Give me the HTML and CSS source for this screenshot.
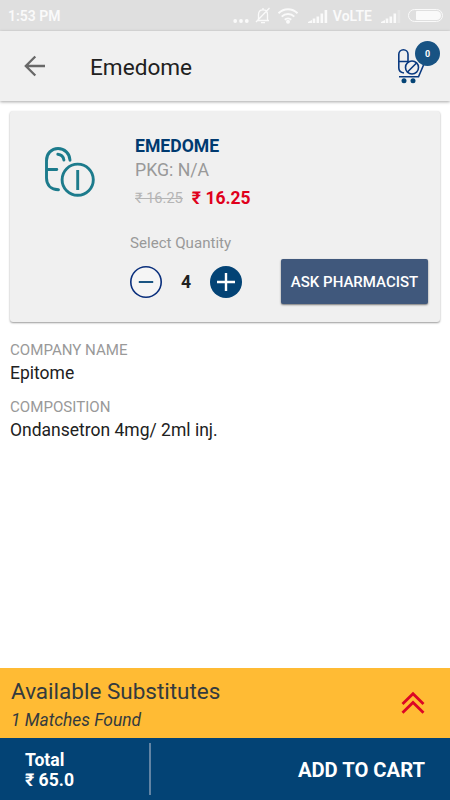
FILE: index.html
```html
<!DOCTYPE html>
<html lang="en">
<head>
  <meta charset="UTF-8">
  <meta name="viewport" content="width=device-width, initial-scale=1.0">
  <title>Emedome</title>
  <link rel="stylesheet" href="styles.css">
</head>
<body>
  <div class="screen">
    <div class="status-bar">
      <span class="time">1:53 PM</span>
      <svg class="status-dots" width="16" height="24" viewBox="0 0 16 24" fill="#fafafa">
        <circle cx="2.2" cy="17" r="1.9"/><circle cx="8" cy="17" r="1.9"/><circle cx="13.8" cy="17" r="1.9"/>
      </svg>
      <svg class="status-bell" width="16" height="18" viewBox="0 0 16 18" fill="none" stroke="#fafafa" stroke-width="1.3">
        <path d="M2 13.500h12M3.500 13V7.500C3.500 4.500 5.200 2.800 8 2.800s4.500 1.700 4.500 4.700V13M8 1v2M6 15.700h4M1 15L14.500 1"/>
      </svg>
      <svg class="status-wifi" width="22" height="16" viewBox="0 0 22 16" fill="none" stroke="#fafafa" stroke-width="2">
        <path d="M1.500 5.200C7-.2 15-.2 20.500 5.200M4.700 8.600c3.600-3.500 9-3.500 12.600 0M7.800 11.800c1.800-1.800 4.600-1.800 6.400 0"/>
        <circle cx="11" cy="13.800" r="1" fill="#fafafa"/>
      </svg>
      <svg class="status-signal" width="20" height="14" viewBox="0 0 20 14" fill="#fafafa">
        <path d="M0 14v-1l4-2v3zM4.700 14v-4.500h2.600V14zM8.500 14V7.500h2.600V14zM12.500 14V4.500h2.600V14zM16.600 14V1h2.600v13z"/>
      </svg>
      <span class="network">VoLTE</span>
      <svg class="status-signal-2" width="20" height="14" viewBox="0 0 20 14" fill="#fafafa">
        <path d="M0 14v-1l4-2v3zM4.700 14v-4.500h2.600V14zM8.500 14V7.500h2.600V14zM12.500 14V4.500h2.600V14z"/>
        <path d="M16.600 14V1h2.600v13z" opacity=".25"/>
      </svg>
      <div class="battery"><div class="battery-level"></div></div>
    </div>

    <header class="toolbar">
      <svg class="back" width="22" height="22" viewBox="0 0 22 22" fill="none" stroke="#686868" stroke-width="2.3">
        <path d="M21 11H2M11.300 1.500L1.800 11l9.500 9.500"/>
      </svg>
      <h1>Emedome</h1>
      <div class="cart">
        <svg width="30" height="36" viewBox="0 0 30 36" fill="none" stroke="#0a3a80" stroke-width="1.6">
          <path d="M7 25C3.500 24.500 1.800 23 1.800 20V6.300a4.600 4.600 0 0 1 9.200 0V14M1.800 13.500H11"/>
          <circle cx="15" cy="19.500" r="6.500"/>
          <path d="M10.500 24l9-9M2 28.800h19.500L27 16"/>
          <circle cx="7" cy="32.800" r="2.500" fill="#034375" stroke="none"/>
          <circle cx="16" cy="32.800" r="2.500" fill="#034375" stroke="none"/>
        </svg>
        <span class="cart-badge">0</span>
      </div>
    </header>

    <main>
      <section class="card">
        <svg class="pill" width="52" height="52" viewBox="0 0 52 52" fill="none" stroke="#1c7b8c" stroke-width="2.9" stroke-linecap="round">
          <path d="M14.500 43.700C7 43.500 2.500 39 2.500 32V14.500C2.500 7.500 7.500 2.500 14 2.500s11.800 5 12 11.800M3 23.500h9.800M13.800 8.300c3.400.3 5.600 2.500 6.100 5.700"/>
          <circle cx="33.700" cy="33.700" r="15.600"/>
          <path d="M33.700 24v20" stroke-linecap="butt"/>
        </svg>
        <div class="details">
          <h2>EMEDOME</h2>
          <p class="package">PKG: N/A</p>
          <p class="prices"><s>₹ 16.25</s><strong>₹ 16.25</strong></p>
        </div>
        <p class="quantity-label">Select Quantity</p>
        <div class="actions">
          <button class="round minus" aria-label="Decrease">
            <svg width="16" height="16" viewBox="0 0 16 16"><path d="M.8 8h14.400" stroke="#034375" stroke-width="1.8"/></svg>
          </button>
          <span class="quantity">4</span>
          <button class="round plus" aria-label="Increase">
            <svg width="18" height="18" viewBox="0 0 18 18"><path d="M0 9h18M9 0v18" stroke="#fff" stroke-width="2.4"/></svg>
          </button>
          <button class="ask">ASK PHARMACIST</button>
        </div>
      </section>

      <dl class="info">
        <dt>COMPANY NAME</dt>
        <dd>Epitome</dd>
        <dt>COMPOSITION</dt>
        <dd>Ondansetron 4mg/ 2ml inj.</dd>
      </dl>
    </main>

    <section class="substitutes">
      <div>
        <h3>Available Substitutes</h3>
        <p>1 Matches Found</p>
      </div>
      <svg width="24" height="24" viewBox="0 0 24 24" fill="none" stroke="#dc0525" stroke-width="2.8">
        <path d="M1.500 13L12 2.700 22.500 13M1.500 21.700L12 11.400l10.500 10.300"/>
      </svg>
    </section>

    <footer class="bottom-bar">
      <div class="total">
        <span>Total</span>
        <span>₹ 65.0</span>
      </div>
      <button class="add">ADD TO CART</button>
    </footer>
  </div>
</body>
</html>
```
FILE: styles.css
```css
* {
  box-sizing: border-box;
}

body {
  margin: 0;
  font-family: Roboto, "Noto Sans", sans-serif;
  background: #fff;
  color: #212121;
}

h1, h2, h3, p, dl, dd {
  margin: 0;
}

button {
  font-family: inherit;
  border: none;
  padding: 0;
  cursor: pointer;
}

svg {
  display: block;
  flex: none;
}

.screen {
  display: flex;
  flex-direction: column;
  height: 100vh;
  min-height: 800px;
}

/* status bar */
.status-bar {
  display: flex;
  align-items: center;
  height: 31px;
  padding: 0 7px 0 8px;
  background: #dfdfdf;
  color: #fafafa;
  font-size: 14px;
  font-weight: 600;
}

.time {
  margin-right: auto;
  padding-top: 1px;
}

.status-bell {
  margin-left: 6px;
}

.status-wifi {
  margin-left: 6px;
}

.status-signal {
  margin: 0 5px 0 9px;
}

.network {
  padding-top: 1px;
}

.status-signal-2 {
  margin: 0 7px 0 9px;
}

.battery {
  width: 35px;
  height: 13px;
  padding: 1px 1px 1px 7px;
  border: 1px solid #fafafa;
  border-radius: 7px;
}

.battery-level {
  height: 100%;
  background: #fafafa;
  border-radius: 1px 5px 5px 1px;
}

/* toolbar */
.toolbar {
  display: flex;
  align-items: center;
  height: 70px;
  padding: 0 10px 0 24px;
  background: #f0f0f0;
  box-shadow: 0 1px 3px rgba(0, 0, 0, 0.35);
}

h1 {
  margin-left: 44px;
  padding-top: 3px;
  font-size: 22.6px;
  font-weight: 400;
}

.cart {
  position: relative;
  width: 43px;
  height: 50px;
  margin-left: auto;
  padding: 7px 0 0;
}

.cart-badge {
  position: absolute;
  top: 0;
  right: 0;
  width: 25px;
  height: 25px;
  border-radius: 50%;
  background: #185383;
  color: #fff;
  font-size: 9px;
  font-weight: 700;
  line-height: 26px;
  text-align: center;
}

main {
  flex: 1;
  padding: 10px;
}

/* product card */
.card {
  display: grid;
  grid-template-columns: 91px 1fr;
  grid-template-rows: 98px 16px 1fr;
  height: 211px;
  padding: 24px 12px 0 34px;
  background: #f0f0f0;
  border-radius: 3px;
  box-shadow: 0 1px 2px rgba(0, 0, 0, 0.4);
}

.pill {
  margin-top: 11px;
}

h2 {
  font-size: 17.6px;
  font-weight: 700;
  line-height: 22px;
  color: #003a70;
}

.package {
  padding-top: 1px;
  font-size: 17.7px;
  line-height: 25px;
  color: #999;
}

.prices {
  display: flex;
  align-items: center;
  gap: 9px;
  margin-top: 4px;
  line-height: 22px;
}

.prices s {
  font-size: 14.6px;
  color: #b5b5b5;
}

.prices strong {
  font-size: 17.5px;
  font-weight: 700;
  color: #e0001b;
}

.quantity-label {
  grid-column: 2;
  margin-left: -5px;
  font-size: 15.1px;
  line-height: 20px;
  color: #999;
}

.actions {
  grid-column: 2;
  display: flex;
  align-items: center;
  height: 45px;
  margin: 10px 0 0 -5px;
}

.round {
  display: flex;
  align-items: center;
  justify-content: center;
  width: 32px;
  height: 32px;
  border-radius: 50%;
}

.minus {
  box-shadow: inset 0 0 0 1.6px #0a2f7c;
  background: #f5f5f5;
}

.plus {
  background: #034375;
}

.quantity {
  width: 48px;
  padding-top: 1px;
  font-size: 17.6px;
  font-weight: 700;
  text-align: center;
}

.ask {
  width: 147px;
  height: 45px;
  margin-left: auto;
  padding-top: 1px;
  border-radius: 2px;
  background: #40587c;
  box-shadow: 0 1px 2px rgba(0, 0, 0, 0.5);
  color: #fff;
  font-size: 15px;
  font-weight: 500;
}

/* company and composition */
.info {
  padding-top: 18px;
}

.info dt {
  font-size: 15.1px;
  line-height: 21px;
  color: #999;
}

.info dd {
  margin-bottom: 12px;
  font-size: 17.5px;
  line-height: 24px;
}

.substitutes {
  display: flex;
  align-items: center;
  justify-content: space-between;
  height: 70px;
  padding: 0 25px 0 11px;
  background: #ffbb34;
  color: #333a3e;
}

h3 {
  padding-top: 4px;
  font-size: 22.5px;
  font-weight: 400;
  line-height: 31px;
}

.substitutes p {
  font-size: 17.4px;
  font-style: italic;
  line-height: 27px;
}

/* bottom bar */
.bottom-bar {
  display: flex;
  align-items: center;
  justify-content: space-between;
  height: 62px;
  padding: 0 25px;
  background: #034375;
  color: #fff;
}

.total {
  display: flex;
  flex-direction: column;
  justify-content: center;
  width: 126px;
  height: 52px;
  padding-top: 2px;
  border-right: 2px solid #6284a4;
  font-size: 17.6px;
  font-weight: 700;
  line-height: 20px;
}

.add {
  padding-top: 2px;
  background: none;
  color: #fff;
  font-size: 20.2px;
  font-weight: 700;
}
```
